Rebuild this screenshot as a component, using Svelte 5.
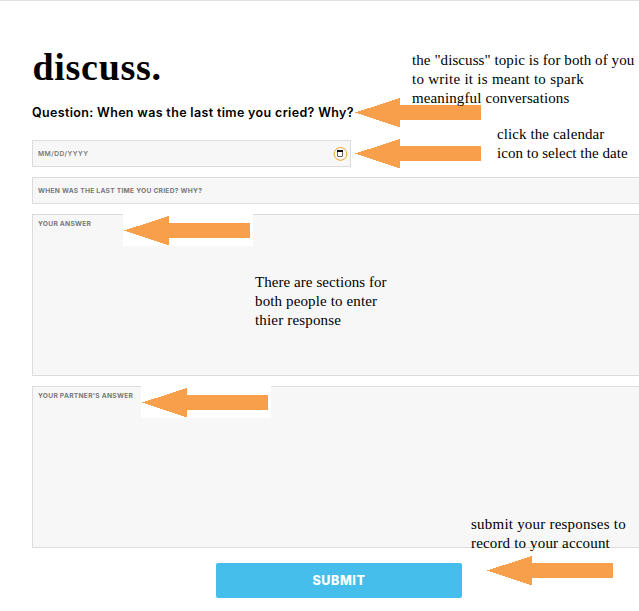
<script>
  const arrows = [
    { x: 355, y: 98 },
    { x: 355, y: 139 },
    { x: 124, y: 216, boxed: true },
    { x: 142, y: 388, boxed: true },
    { x: 487, y: 556 }
  ];
  const notes = [
    { x: 412, y: 51, lines: [
      { text: 'the "discuss" topic is for both of you', gap: 0.08 },
      { text: 'to write it is meant to spark', gap: 0.27 },
      { text: 'meaningful conversations', gap: 0.12 }
    ] },
    { x: 497, y: 125, lines: [
      { text: 'click the calendar', gap: 0.09 },
      { text: 'icon to select the date', gap: 0.03 }
    ] },
    { x: 255, y: 273, lines: [
      { text: 'There are sections for', gap: 0.06 },
      { text: 'both people to enter', gap: 0.13 },
      { text: 'thier response', gap: 0.17 }
    ] },
    { x: 471, y: 515, lines: [
      { text: 'submit your responses to', gap: 0.22 },
      { text: 'record to your account', gap: 0.16 }
    ] }
  ];
</script>

<main>
  <h1>discuss.</h1>
  <h2>Question: When was the last time you cried? Why?</h2>
  <form>
    <div class="field date">
      <span class="mask">MM/DD/YYYY</span>
      <svg width="15" height="15" viewBox="0 0 15 15" aria-label="Open calendar">
        <circle cx="7.5" cy="7.9" r="6.4" fill="none" stroke="#f5a32c" />
        <rect x="4.5" y="4.5" width="5" height="6" rx="0.5" fill="#fff" stroke="#666" />
        <path d="M4 4h6v2H4z" fill="#111" />
      </svg>
    </div>
    <div class="field question"><span>WHEN WAS THE LAST TIME YOU CRIED? WHY?</span></div>
    <div class="field area"><span>YOUR ANSWER</span></div>
    <div class="field area"><span>YOUR PARTNER'S ANSWER</span></div>
    <button type="button">SUBMIT</button>
  </form>

  {#each arrows as a}
    <svg class="arrow" class:boxed={a.boxed} style="left:{a.x}px;top:{a.y}px" width="126" height="30" viewBox="0 0 126 30" shape-rendering="crispEdges">
      <path d="M0 14.5 45 0V7H126V22H45V29.5Z" fill="#f79f4a" />
    </svg>
  {/each}
  {#each notes as n}
    <p class="note" style="left:{n.x}px;top:{n.y}px">
      {#each n.lines as l}<span style="letter-spacing:{l.gap}px">{l.text}</span>{/each}
    </p>
  {/each}
</main>

<style>
  main {
    position: relative;
    box-sizing: border-box;
    width: 639px;
    height: 611px;
    padding: 43px 0 0 32px;
    overflow: hidden;
    background: #fff;
    border-top: 1px solid #e2e2e2;
    color: #000;
    font-family: Inter, "Open Sans", sans-serif;
  }
  h1 {
    margin: 0;
    padding-left: 0.5px;
    font: bold 38px/46px "Liberation Serif", serif;
    letter-spacing: 0.7px;
  }
  h2 {
    margin: 13px 0 0;
    font-size: 12.5px;
    line-height: 20px;
    font-weight: 600;
    letter-spacing: 0.34px;
    white-space: nowrap;
  }
  form {
    display: flex;
    flex-direction: column;
    align-items: flex-start;
    gap: 10px;
    width: 640px;
    margin-top: 17px;
  }
  .field {
    box-sizing: border-box;
    display: flex;
    width: 100%;
    height: 27px;
    padding: 0 5px;
    align-items: center;
    border: 1px solid #dcdcdc;
    background: #f7f7f7;
    color: #777;
    font-size: 6.7px;
    line-height: 10px;
    font-weight: 700;
    letter-spacing: 0.25px;
    white-space: nowrap;
  }
  .date {
    width: 319px;
    justify-content: space-between;
    padding: 0 2px 0 5px;
  }
  .mask {
    font-weight: 600;
    letter-spacing: 0.45px;
  }
  .area {
    height: 162px;
    align-items: flex-start;
    padding-top: 4px;
  }
  button {
    width: 246px;
    height: 35px;
    margin: 5px 0 0 184px;
    padding: 0;
    border: 0;
    border-radius: 2px;
    background: #46beeb;
    color: #fff;
    font: 800 12.5px/35px Inter, sans-serif;
    letter-spacing: 0.6px;
  }
  .arrow {
    position: absolute;
    margin-top: -1px;
  }
  .boxed {
    padding: 2px 3px 0 1px;
    margin: -3px 0 0 -1px;
    background: #fff;
  }
  .note {
    position: absolute;
    margin: -1px 0 0;
    display: flex;
    flex-direction: column;
    align-items: flex-start;
    font: 15px/19px "Liberation Serif", serif;
    white-space: nowrap;
  }
</style>
